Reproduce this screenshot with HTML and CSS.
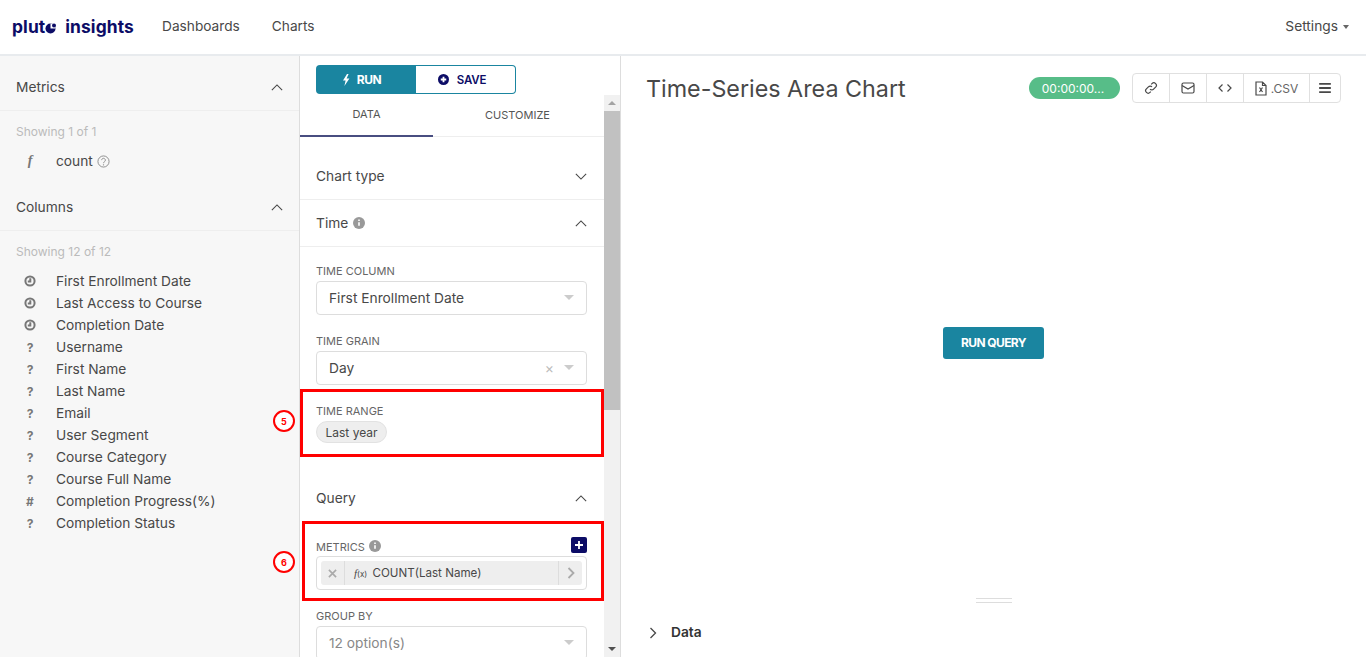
FILE: index.html
```html
<!DOCTYPE html>
<html lang="en">
<head>
<meta charset="utf-8">
<title>Time-Series Area Chart</title>
<link rel="stylesheet" href="styles.css">
</head>
<body>
<header class="topbar">
  <div class="logo">plut<svg class="logo-o" viewBox="0 0 12 12"><circle cx="5.500" cy="6.500" r="5" fill="#0c0c66"/><path d="M5.500 6.500V1.500A5 5 0 0 1 10.500 6.500Z" fill="#fff"/><circle cx="9" cy="3.500" r="2" fill="#0c0c66"/></svg><span class="logo-rest">insights</span></div>
  <nav class="nav"><a>Dashboards</a><a>Charts</a></nav>
  <div class="settings">Settings <i class="caret-sm"></i></div>
</header>
<main class="app">
  <aside class="left">
    <div class="lhead lhead-first"><span>Metrics</span><svg class="chev" viewBox="0 0 14 8"><path d="M1 7l6-6 6 6"/></svg></div>
    <div class="showing">Showing 1 of 1</div>
    <ul class="items">
      <li><span class="ico ico-f">f</span>count <svg class="q" viewBox="0 0 14 14"><circle cx="7" cy="7" r="6"/><path d="M5 5.500a2 2 0 1 1 3 1.800c-.7.4-1 .8-1 1.500"/><circle class="qd" cx="7" cy="10.600" r=".7"/></svg></li>
    </ul>
    <div class="lhead"><span>Columns</span><svg class="chev" viewBox="0 0 14 8"><path d="M1 7l6-6 6 6"/></svg></div>
    <div class="showing">Showing 12 of 12</div>
    <ul class="items">
      <li><span class="ico"><svg class="clock" viewBox="0 0 12 12"><circle cx="6" cy="6" r="4.600"/><path d="M6.300 3.200V6.500H3.800"/></svg></span>First Enrollment Date</li>
      <li><span class="ico"><svg class="clock" viewBox="0 0 12 12"><circle cx="6" cy="6" r="4.600"/><path d="M6.300 3.200V6.500H3.800"/></svg></span>Last Access to Course</li>
      <li><span class="ico"><svg class="clock" viewBox="0 0 12 12"><circle cx="6" cy="6" r="4.600"/><path d="M6.300 3.200V6.500H3.800"/></svg></span>Completion Date</li>
      <li><span class="ico">?</span>Username</li>
      <li><span class="ico">?</span>First Name</li>
      <li><span class="ico">?</span>Last Name</li>
      <li><span class="ico">?</span>Email</li>
      <li><span class="ico">?</span>User Segment</li>
      <li><span class="ico">?</span>Course Category</li>
      <li><span class="ico">?</span>Course Full Name</li>
      <li><span class="ico">#</span>Completion Progress(%)</li>
      <li><span class="ico">?</span>Completion Status</li>
    </ul>
  </aside>
  <section class="mid">
    <div class="actions">
      <button class="btn-run"><svg viewBox="0 0 8 12"><path d="M5 0L1 6.500h2.600L2.400 12 7.400 4.600H4.600L6.600 0Z"/></svg>RUN</button>
      <button class="btn-save"><svg viewBox="0 0 12 12"><circle cx="6" cy="6" r="6"/><path class="plus" d="M6 3v6M3 6h6"/></svg>SAVE</button>
    </div>
    <div class="mid-body">
      <div class="form">
        <div class="tabs"><div class="tab tab-active">DATA</div><div class="tab tab-other">CUSTOMIZE</div></div>
        <div class="sec sec-chart"><span>Chart type</span><svg class="chev" viewBox="0 0 14 8"><path d="M1 1l6 6 6-6"/></svg></div>
        <div class="sec sec-time"><span>Time <svg class="info" viewBox="0 0 12 12"><circle cx="6" cy="6" r="6"/><path d="M6 5.200v3.600M6 2.600v1.400"/></svg></span><svg class="chev" viewBox="0 0 14 8"><path d="M1 7l6-6 6 6"/></svg></div>
        <div class="fields">
          <label class="lbl">TIME COLUMN</label>
          <div class="select"><span>First Enrollment Date</span><i class="caret"></i></div>
          <label class="lbl">TIME GRAIN</label>
          <div class="select"><span>Day</span><em class="clear">×</em><i class="caret"></i></div>
          <label class="lbl">TIME RANGE</label>
          <div class="pill">Last year</div>
        </div>
        <div class="sec sec-query"><span>Query</span><svg class="chev" viewBox="0 0 14 8"><path d="M1 7l6-6 6 6"/></svg></div>
        <div class="fields fields-q">
          <div class="lbl-row"><label class="lbl lbl-m">METRICS <svg class="info" viewBox="0 0 12 12"><circle cx="6" cy="6" r="6"/><path d="M6 5.200v3.600M6 2.600v1.400"/></svg></label><span class="add"><svg viewBox="0 0 10 10"><path d="M5 1v8M1 5h8"/></svg></span></div>
          <div class="metric-box">
            <div class="metric">
              <span class="m-x"><svg viewBox="0 0 10 10"><path d="M1 1l8 8M9 1l-8 8"/></svg></span>
              <span class="m-label"><small><b>f</b>(x)</small> COUNT(Last Name)</span>
              <span class="m-go"><svg viewBox="0 0 8 12"><path d="M1.500 1l5 5-5 5"/></svg></span>
            </div>
          </div>
          <label class="lbl">GROUP BY</label>
          <div class="select select-muted"><span>12 option(s)</span><i class="caret"></i></div>
        </div>
      </div>
      <div class="scrollbar">
        <i class="arr arr-up"></i>
        <div class="thumb"></div>
        <i class="arr arr-down"></i>
      </div>
    </div>
    <div class="mark mark-5"></div>
    <div class="mark mark-6"></div>
    <div class="num num-5">5</div>
    <div class="num num-6">6</div>
  </section>
  <section class="chart">
    <div class="chart-head">
      <h1>Time-Series Area Chart</h1>
      <div class="timer">00:00:00...</div>
      <div class="tools">
        <span class="tool"><svg viewBox="0 0 14 14"><path d="M6 8.200a2.500 2.500 0 0 0 3.600 0l2-2a2.500 2.500 0 0 0-3.600-3.600l-.8.8M8 5.800a2.500 2.500 0 0 0-3.600 0l-2 2a2.500 2.500 0 0 0 3.600 3.600l.8-.8"/></svg></span>
        <span class="tool"><svg viewBox="0 0 14 12"><rect x="1" y="1" width="12" height="10" rx="1.500"/><path d="M1 3.500l6 3.500 6-3.500"/></svg></span>
        <span class="tool"><svg viewBox="0 0 14 10"><path d="M4.500 1.500L1 5l3.500 3.500M9.500 1.500L13 5l-3.500 3.500"/></svg></span>
        <span class="tool tool-csv"><svg viewBox="0 0 12 15"><path d="M1 1h6.500L11 4.500V14H1ZM7.500 1v3.500H11M4.500 6.500l3 4.500M7.500 6.500l-3 4.500"/></svg>.CSV</span>
        <span class="tool"><svg viewBox="0 0 12 10"><path class="bars" d="M1 1.500h10M1 5h10M1 8.500h10"/></svg></span>
      </div>
    </div>
    <div class="chart-body"><button class="btn-query">RUN QUERY</button></div>
    <div class="grip"></div>
    <div class="data-row"><svg viewBox="0 0 8 12"><path d="M1.500 1l5 5-5 5"/></svg><span>Data</span></div>
  </section>
</main>
</body>
</html>
```

FILE: styles.css
```css
* { box-sizing: border-box; }
html, body { margin: 0; height: 657px; overflow: hidden; }
body { font-family: "Inter", "Liberation Sans", sans-serif; color: #484848; background: #fff; font-size: 13.75px; }
ul { list-style: none; margin: 0; padding: 0; }
svg { display: inline-block; }
button { font-family: inherit; border: 0; padding: 0; }

.topbar { height: 56px; display: flex; align-items: center; border-bottom: 2px solid #e8ebee; background: #fff; padding: 0 17px 2px 12px; }
.logo { font-size: 17.400px; font-weight: 700; color: #0c0c66; display: flex; align-items: center; width: 150px; letter-spacing: .1px; }
.logo-o { width: 12px; height: 12px; margin: 3px 0 0 0; }
.logo-rest { margin-left: 8px; }
.nav { display: flex; gap: 32px; font-size: 13.700px; color: #484848; }
.settings { margin-left: auto; font-size: 13.750px; display: flex; align-items: center; gap: 5px; }
.caret-sm { border: 3px solid transparent; border-top: 4px solid #666; border-bottom: 0; margin-top: 2px; }

.app { display: flex; height: 601px; }
.left { width: 300px; flex: none; background: #f7f7f7; border-right: 1px solid #ddd; }
.lhead { height: 47px; margin-top: 12px; display: flex; align-items: center; justify-content: space-between; padding: 0 16px; border-bottom: 1px solid #eee; }
.lhead-first { height: 55px; margin-top: 0; padding: 8px 16px 0; }
.chev { width: 12px; height: 7px; fill: none; stroke: #484848; stroke-width: 1.300; }
.showing { color: #bbb; font-size: 12px; line-height: 20px; margin: 11px 16px 8px; }
.items li { height: 22px; display: flex; align-items: center; padding: 0 0 0 24px; }
.ico { width: 12px; margin-right: 20px; flex: none; color: #777; font-weight: 700; font-size: 12px; display: flex; justify-content: center; }
.ico-f { font-family: "Liberation Serif", serif; font-style: italic; font-size: 14px; }
.clock { width: 12px; height: 12px; fill: none; stroke: #777; stroke-width: 2; }
.q { width: 13px; height: 13px; fill: none; stroke: #888; margin-left: 4px; }
.qd { fill: #888; stroke: none; }

.mid { width: 321px; flex: none; border-right: 1px solid #ddd; position: relative; display: flex; flex-direction: column; }
.actions { display: flex; margin: 9px 0 0 16px; height: 29px; width: 200px; flex: none; }
.btn-run { width: 100px; background: #1a85a0; color: #fff; font-size: 12px; font-weight: 700; letter-spacing: -.4px; border-radius: 4px 0 0 4px; display: flex; align-items: center; justify-content: center; gap: 7px; padding-right: 9px; }
.btn-run svg { width: 8px; height: 12px; fill: #fff; }
.btn-save { width: 100px; background: #fff; color: #0c0c66; font-size: 11.500px; font-weight: 600; letter-spacing: -.2px; border: 1px solid #1a85a0; border-left: 0; border-radius: 0 4px 4px 0; display: flex; align-items: center; justify-content: center; gap: 8px; padding-right: 7px; }
.btn-save svg { width: 11px; height: 11px; fill: #0c0c66; }
.plus { stroke: #fff; stroke-width: 2; }
.mid-body { flex: 1; min-height: 0; display: flex; overflow: hidden; }
.form { width: 304px; flex: none; padding-top: 1px; }
.tabs { display: flex; height: 42px; border-bottom: 1px solid #eee; }
.tab { display: flex; align-items: center; justify-content: center; font-size: 11px; color: #555; padding-bottom: 2px; }
.tab-active { width: 133px; border-bottom: 2px solid #484d80; height: 42px; }
.tab-other { flex: 1; padding-right: 2px; }
.sec { display: flex; align-items: center; justify-content: space-between; padding: 0 17px 0 16px; }
.sec-chart { height: 63px; padding-top: 16px; border-bottom: 1px solid #eee; }
.sec-time { height: 47px; border-bottom: 1px solid #eee; }
.sec-query { height: 46px; margin-top: 32px; }
.info { width: 12px; height: 12px; fill: #999; stroke: none; vertical-align: -1px; margin-left: 1px; }
.info path { stroke: #fff; stroke-width: 1.600; }
.fields { padding: 0 17px 0 16px; }
.lbl { display: block; font-size: 11px; line-height: 14px; color: #666; margin: 0 0 3px; }
.fields > .lbl:first-child { margin-top: 17px; }
.select { height: 34px; border: 1px solid #ddd; border-radius: 4px; display: flex; align-items: center; padding: 0 12px 1px; margin-bottom: 19px; }
.select span { flex: 1; }
.select-muted { color: #888; }
.clear { font-style: normal; color: #bbb; font-size: 14px; margin-right: 10px; }
.caret { border: 5px solid transparent; border-top: 5px solid #ccc; border-bottom: 0; }
.pill { width: 71px; height: 22px; background: #eee; border: 1px solid #e2e2e2; border-radius: 11px; font-size: 12px; display: flex; align-items: center; justify-content: center; }
.fields-q { padding-top: 16px; }
.lbl-row { display: flex; justify-content: space-between; align-items: center; height: 16px; margin-bottom: 3px; }
.lbl-m { margin: 3px 0 0; }
.add { width: 16px; height: 16px; background: #0c0c66; border-radius: 2px; display: flex; align-items: center; justify-content: center; }
.add svg { width: 10px; height: 10px; stroke: #fff; stroke-width: 1.800; }
.metric-box { height: 34px; border: 1px solid #ddd; border-radius: 4px; padding: 4px; margin-bottom: 19px; }
.metric { height: 24px; background: #eee; border-radius: 3px; display: flex; align-items: center; font-size: 11.600px; }
.m-x { width: 24px; height: 100%; display: flex; align-items: center; justify-content: center; border-right: 1px solid #ddd; }
.m-x svg { width: 9px; height: 9px; stroke: #aaa; stroke-width: 1.800; }
.m-label { flex: 1; padding-left: 9px; }
.m-label small { font-size: 8px; margin-right: 2px; }
.m-label b { font-family: "Liberation Serif", serif; font-style: italic; font-weight: 400; font-size: 11px; }
.m-go { width: 24px; height: 100%; display: flex; align-items: center; justify-content: center; border-left: 1px solid #ddd; }
.m-go svg { width: 8px; height: 12px; fill: none; stroke: #aaa; stroke-width: 1.800; }

.scrollbar { width: 16px; flex: none; background: #f1f1f1; display: flex; flex-direction: column; align-items: center; margin-top: 1px; }
.arr { flex: none; height: 16px; width: 16px; position: relative; }
.arr::after { content: ""; position: absolute; left: 4px; top: 6px; border: 4px solid transparent; }
.arr-up::after { border-bottom: 4px solid #a3a3a3; border-top: 0; }
.arr-down::after { border-top: 4px solid #505050; border-bottom: 0; }
.thumb { width: 100%; height: 299px; background: #c1c1c1; flex: none; }
.arr-down { margin-top: auto; }

.mark { position: absolute; border: 3px solid #f00; pointer-events: none; }
.mark-5 { left: 0; top: 333px; width: 304px; height: 68px; }
.mark-6 { left: 2px; top: 465px; width: 302px; height: 80px; }
.num { position: absolute; width: 22px; height: 22px; border: 2px solid #f00; border-radius: 50%; background: #fff; color: #f00; font-size: 9px; font-weight: 700; display: flex; align-items: center; justify-content: center; left: -27px; }
.num-5 { top: 354px; }
.num-6 { top: 495px; }

.chart { flex: 1; min-width: 0; display: flex; flex-direction: column; padding: 0 25px; }
.chart-head { display: flex; align-items: center; height: 64px; flex: none; }
h1 { margin: 0; font-size: 23.300px; font-weight: 400; color: #484848; flex: 1; }
.timer { width: 91px; height: 22px; border-radius: 11px; background: #57bd88; color: #fff; font-size: 12px; display: flex; align-items: center; justify-content: center; margin-right: 12px; padding-right: 3px; }
.tools { display: flex; height: 30px; border: 1px solid #e0e0e0; border-radius: 4px; }
.tool { width: 37px; display: flex; align-items: center; justify-content: center; border-right: 1px solid #e0e0e0; font-size: 12px; color: #666; }
.tool:last-child { border-right: 0; width: 30px; }
.tool svg { width: 14px; height: 14px; fill: none; stroke: #484848; stroke-width: 1.200; }
.tool-csv { width: 66px; gap: 4px; }
.tool-csv svg { height: 15px; width: 12px; }
.tool .bars { stroke-width: 1.600; }
.chart-body { flex: 1; display: flex; align-items: center; justify-content: center; padding-bottom: 32px; min-height: 0; }
.btn-query { width: 101px; height: 32px; border-radius: 3px; background: #1a85a0; color: #fff; font-size: 12px; font-weight: 700; letter-spacing: -.6px; padding-bottom: 2px; }
.grip { width: 36px; height: 5px; border-top: 1px solid #ddd; border-bottom: 1px solid #ddd; margin: 0 0 0 330px; flex: none; }
.data-row { height: 54px; flex: none; display: flex; align-items: flex-start; padding: 21px 0 0 3px; gap: 14px; font-weight: 600; color: #333; }
.data-row svg { width: 8px; height: 12px; fill: none; stroke: #484848; stroke-width: 1.300; margin-top: 3px; }
```
